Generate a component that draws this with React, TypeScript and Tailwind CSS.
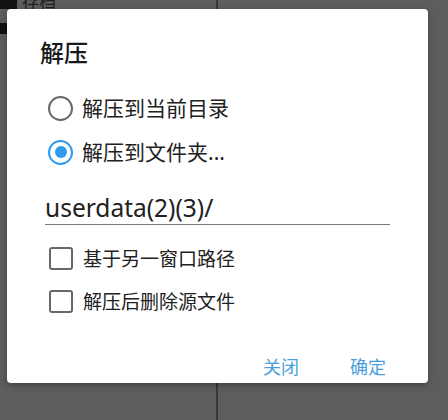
import { useState } from "react";

const FONT = '"Noto Sans", "Noto Sans CJK SC", sans-serif';

function Radio({ checked }: { checked: boolean }) {
  return checked ? (
    <span className="flex h-[25px] w-[25px] shrink-0 items-center justify-center rounded-full border-[2.5px] border-[#2e9bf0]">
      <span className="h-[12px] w-[12px] rounded-full bg-[#2e9bf0]" />
    </span>
  ) : (
    <span className="h-[25px] w-[25px] shrink-0 rounded-full border-[2.5px] border-[#686868]" />
  );
}

function Checkbox({ checked }: { checked: boolean }) {
  return (
    <span
      className={
        checked
          ? "h-[23px] w-[24px] shrink-0 rounded-[3px] border-[2.5px] border-[#2e9bf0] bg-[#2e9bf0]"
          : "h-[23px] w-[24px] shrink-0 rounded-[3px] border-[2.5px] border-[#686868]"
      }
    />
  );
}

export default function App() {
  const [mode, setMode] = useState<"current" | "folder">("folder");
  const [path, setPath] = useState("userdata(2)(3)/");
  const [otherPane, setOtherPane] = useState(false);
  const [deleteSrc, setDeleteSrc] = useState(false);

  return (
    <div
      className="relative h-[420px] w-[448px] overflow-hidden bg-[#5d5d5d]"
      style={{ fontFamily: FONT }}
    >
      {/* page behind the dimmed overlay */}
      <div className="absolute left-0 top-0 h-[9px] w-[17px] bg-[#111]" />
      <div className="absolute left-[22px] top-[-8px] text-[17px] leading-[20px] text-[#1e1e1e]">
        存档
      </div>
      <div className="absolute left-0 top-[23px] h-[11px] w-[7px] bg-[#111]" />
      <div className="absolute left-[216px] top-0 h-full w-[2px] bg-[#383838]" />

      {/* dialog */}
      <div className="absolute left-[7px] top-[9px] flex h-[374px] w-[421px] flex-col rounded-[4px] bg-white pl-[33px] pt-[28px] shadow-[0_2px_6px_rgba(0,0,0,0.3)]">
        <h1 className="h-[32px] text-[24px] font-medium leading-[32px] text-[#1a1a1a]">
          解压
        </h1>

        <div className="mt-[17px] flex flex-col pl-[8px]">
          <button
            className="flex h-[44px] items-center gap-[9px] text-left"
            onClick={() => setMode("current")}
          >
            <Radio checked={mode === "current"} />
            <span className="text-[21px] leading-[28px] text-[#212121]">解压到当前目录</span>
          </button>
          <button
            className="flex h-[44px] items-center gap-[9px] text-left"
            onClick={() => setMode("folder")}
          >
            <Radio checked={mode === "folder"} />
            <span className="text-[21px] leading-[28px] text-[#212121]">解压到文件夹...</span>
          </button>
        </div>

        <div className="ml-[5px] mt-[17px] flex h-[34px] w-[345px] items-center border-b border-[#7a7a7a]">
          <input
            className="w-full bg-transparent text-[24.5px] leading-[30px] text-[#212121] outline-none"
            value={path}
            onChange={(e) => setPath(e.target.value)}
          />
        </div>

        <div className="mt-[12px] flex flex-col pl-[9px]">
          <button
            className="flex h-[43px] items-center gap-[10px] text-left"
            onClick={() => setOtherPane(!otherPane)}
          >
            <Checkbox checked={otherPane} />
            <span className="text-[19px] leading-[26px] text-[#212121]">基于另一窗口路径</span>
          </button>
          <button
            className="flex h-[43px] items-center gap-[10px] text-left"
            onClick={() => setDeleteSrc(!deleteSrc)}
          >
            <Checkbox checked={deleteSrc} />
            <span className="text-[19px] leading-[26px] text-[#212121]">解压后删除源文件</span>
          </button>
        </div>

        <div className="mt-[28px] flex h-[32px] items-center justify-end gap-[51px] pr-[42px]">
          <button className="text-[18px] leading-[24px] text-[#4a9edb]">关闭</button>
          <button className="text-[18px] leading-[24px] text-[#4a9edb]">确定</button>
        </div>
      </div>
    </div>
  );
}
